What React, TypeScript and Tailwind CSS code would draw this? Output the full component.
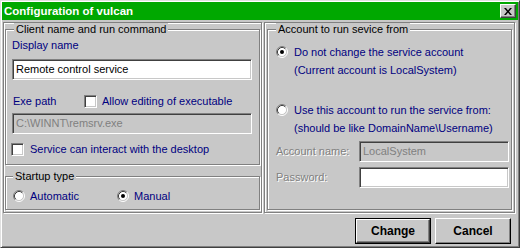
import React from "react";

const sunken =
  "border border-t-[#808080] border-l-[#808080] border-r-white border-b-white shadow-[inset_1px_1px_0_#404040,inset_-1px_-1px_0_#c8c8c8]";
const etched = "border border-[#808080] shadow-[inset_1px_1px_0_#fff,1px_1px_0_#fff]";

function Radio({ checked }: { checked?: boolean }) {
  return (
    <svg width="12" height="12" viewBox="0 0 12 12" className="shrink-0 block">
      <circle cx="6" cy="6" r="4.5" fill="#fff" />
      <path d="M2.11 9.89A5.5 5.5 0 0 1 9.89 2.11" stroke="#808080" fill="none" />
      <path d="M9.89 2.11A5.5 5.5 0 0 1 2.11 9.89" stroke="#fff" fill="none" />
      <path d="M2.82 9.18A4.5 4.5 0 0 1 9.18 2.82" stroke="#404040" fill="none" />
      <path d="M9.18 2.82A4.5 4.5 0 0 1 2.82 9.18" stroke="#c8c8c8" fill="none" />
      {checked && <circle cx="6" cy="6" r="2" fill="#000" />}
    </svg>
  );
}

function Checkbox() {
  return <div className={"w-[13px] h-[13px] bg-white shrink-0 " + sunken} />;
}

function Legend({ children, left }: { children: React.ReactNode; left: string }) {
  return (
    <span className={"absolute -top-[7px] px-[2px] bg-[#c8c8c8] text-black whitespace-nowrap " + left}>
      {children}
    </span>
  );
}

export default function App() {
  return (
    <div className="w-[520px] h-[248px] bg-[#c8c8c8] border border-t-[#e0e0e0] border-l-[#e0e0e0] border-r-[#404040] border-b-[#404040] shadow-[inset_1px_1px_0_#fff,inset_-1px_-1px_0_#808080] p-[1px] flex flex-col font-['Liberation_Sans',Arial,sans-serif] text-[11px] leading-[13px] text-[#000080] overflow-hidden">
      {/* Title bar */}
      <div className="h-[18px] shrink-0 bg-[#00a800] flex items-center justify-between pl-[2px] pr-[2px]">
        <span className="text-white font-bold text-[11.5px]">Configuration of vulcan</span>
        <div className="w-[16px] h-[14px] bg-[#c8c8c8] border border-t-white border-l-white border-r-[#404040] border-b-[#404040] shadow-[inset_-1px_-1px_0_#808080] flex items-center justify-center">
          <svg width="8" height="7" viewBox="0 0 8 7" className="block">
            <path d="M0 0h2l2 2.5L6 0h2L5 3.5 8 7H6L4 4.5 2 7H0l3-3.5z" fill="#000" />
          </svg>
        </div>
      </div>

      {/* Body */}
      <div className="flex mt-[2px] h-[191px] shrink-0">
        {/* Left panel */}
        <div className={"ml-[1px] w-[259px] h-full pt-[6px] px-[1px] flex flex-col " + etched}>
          <div className={"relative h-[136px] pl-[6px] pt-[9px] flex flex-col " + etched}>
            <Legend left="left-[8px]">Client name and run command</Legend>
            <div>Display name</div>
            <div className={"mt-[7px] w-[240px] h-[21px] bg-white flex items-center pl-[3px] text-black " + sunken}>
              Remote control service
            </div>
            <div className="mt-[15px] flex items-center h-[13px]">
              <span className="w-[72px] pl-px">Exe path</span>
              <Checkbox />
              <span className="ml-[5px]">Allow editing of executable</span>
            </div>
            <div className={"mt-[5px] w-[240px] h-[21px] bg-[#c8c8c8] flex items-center pl-[3px] text-[#808080] " + sunken}>
              C:\WINNT\remsrv.exe
            </div>
            <div className="mt-[9px] -ml-px flex items-center h-[13px]">
              <Checkbox />
              <span className="ml-[6px]">Service can interact with the desktop</span>
            </div>
          </div>
          <div className={"relative mt-[11px] h-[34px] pl-[7px] pt-[13px] flex " + etched}>
            <Legend left="left-[7px]">Startup type</Legend>
            <div className="w-[104px] flex items-center h-[12px]">
              <Radio />
              <span className="ml-[5px]">Automatic</span>
            </div>
            <div className="flex items-center h-[12px]">
              <Radio checked />
              <span className="ml-[5px]">Manual</span>
            </div>
          </div>
        </div>

        {/* Right panel */}
        <div className={"ml-[2px] w-[251px] h-full pt-[6px] px-[2px] flex flex-col " + etched}>
          <div className={"relative h-[181px] pl-[8px] pt-[16px] flex flex-col " + etched}>
            <Legend left="left-[8px]">Account to run sevice from</Legend>
            <div className="flex items-center h-[12px]">
              <Radio checked />
              <span className="ml-[6px]">Do not change the service account</span>
            </div>
            <div className="mt-[6px] pl-[18px]">(Current account is LocalSystem)</div>
            <div className="mt-[27px] flex items-center h-[12px]">
              <Radio />
              <span className="ml-[6px]">Use this account to run the service from:</span>
            </div>
            <div className="mt-[6px] pl-[18px]">(should be like DomainName\Username)</div>
            <div className="mt-[6px] flex items-center">
              <span className="w-[83px] text-[#808080] [text-shadow:1px_1px_0_#fff]">Account name:</span>
              <div className={"w-[150px] h-[21px] bg-[#c8c8c8] flex items-center pl-[3px] text-[#808080] " + sunken}>
                LocalSystem
              </div>
            </div>
            <div className="mt-[5px] flex items-center">
              <span className="w-[83px] text-[#808080] [text-shadow:1px_1px_0_#fff]">Password:</span>
              <div className={"w-[150px] h-[21px] bg-white " + sunken} />
            </div>
          </div>
        </div>
      </div>

      {/* Buttons */}
      <div className="mt-[5px] flex justify-end gap-[4px] pr-[7px]">
        <button className="w-[76px] h-[26px] border border-black p-0 bg-[#c8c8c8]">
          <div className="w-full h-full border border-t-white border-l-white border-r-[#404040] border-b-[#404040] shadow-[inset_-1px_-1px_0_#808080] flex items-center justify-center font-bold text-[12px] text-black">
            Change
          </div>
        </button>
        <button className="w-[76px] h-[26px] p-0 bg-[#c8c8c8] border border-t-white border-l-white border-r-black border-b-black shadow-[inset_-1px_-1px_0_#808080] flex items-center justify-center font-bold text-[12px] text-black">
          Cancel
        </button>
      </div>
    </div>
  );
}
